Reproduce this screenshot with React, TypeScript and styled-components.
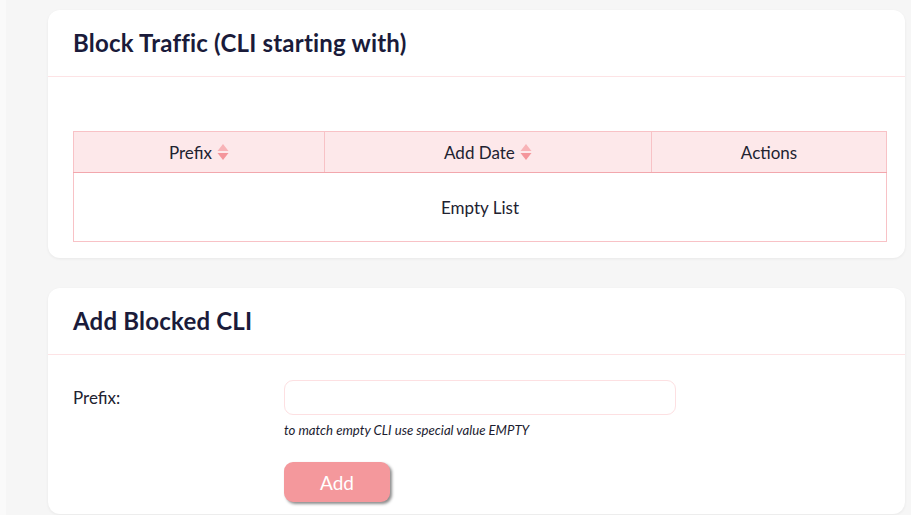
import React from "react";
import styled, { createGlobalStyle } from "styled-components";

const Global = createGlobalStyle`
  html, body { margin: 0; padding: 0; }
  body {
    background: #f6f6f6;
    font-family: Lato, "Open Sans", sans-serif;
    color: #1c1c30;
  }
`;

const Page = styled.div`
  min-height: 515px;
  display: flex;
  background: #f6f6f6;
`;

const Edge = styled.div`
  width: 6px;
  flex: none;
  background: #fafafa;
`;

const Main = styled.main`
  flex: 1;
  padding: 10px 6px 0 42px;
  display: flex;
  flex-direction: column;
  gap: 30px;
`;

const Card = styled.section`
  background: #fff;
  border-radius: 12px;
  box-shadow: 0 1px 3px rgba(0, 0, 0, 0.06);
`;

const CardHeader = styled.header`
  height: 67px;
  box-sizing: border-box;
  padding: 0 25px 1px;
  display: flex;
  align-items: center;
  border-bottom: 1px solid #fde3e5;
`;

const Title = styled.h2`
  margin: 0;
  font-size: 24px;
  font-weight: 700;
  letter-spacing: 0.2px;
  color: #1a1b3a;
`;

const TableBody = styled.div`
  padding: 54px 18px 16px 25px;
`;

const Table = styled.table`
  width: 100%;
  border-collapse: collapse;
  font-size: 17px;
  color: #222230;
`;

const Th = styled.th<{ $w: number }>`
  width: ${(p) => p.$w}px;
  height: 40px;
  background: #fde8ea;
  border: 1px solid #f8c2c6;
  border-bottom-color: #f2a7ad;
  font-weight: 400;
  text-align: center;
  padding: 0;
`;

const Td = styled.td`
  height: 68px;
  text-align: center;
  border: 1px solid #f8c2c6;
  padding: 0;
`;

const HeadInner = styled.span`
  display: inline-flex;
  align-items: center;
  gap: 5px;
`;

const SortIcon = () => (
  <svg width="12" height="20" viewBox="0 0 12 20">
    <path d="M6 2 L11.5 9 H0.5 Z" fill="#f8b3b7" />
    <path d="M6 18 L11.5 11 H0.5 Z" fill="#f4959b" />
  </svg>
);

const FormBody = styled.div`
  padding: 25px 25px 12px 25px;
  display: grid;
  grid-template-columns: 211px 392px;
`;

const Label = styled.label`
  font-size: 17px;
  padding-top: 7px;
  color: #222230;
`;

const Field = styled.div`
  display: flex;
  flex-direction: column;
  align-items: flex-start;
`;

const Input = styled.input`
  width: 392px;
  height: 35px;
  box-sizing: border-box;
  border: 1px solid #fde0e2;
  border-radius: 9px;
  outline: none;
  font-family: inherit;
  font-size: 15px;
  padding: 0 12px;
`;

const Hint = styled.div`
  margin-top: 7px;
  font-size: 13.2px;
  font-style: italic;
  color: #1c1c30;
`;

const Button = styled.button`
  margin-top: 24px;
  width: 106px;
  height: 40px;
  border: none;
  border-radius: 9px;
  background: #f4989c;
  color: #fff;
  font-family: inherit;
  font-size: 19px;
  box-shadow: 2px 2px 3px rgba(0, 0, 0, 0.45);
`;

export default function App() {
  return (
    <>
      <Global />
      <Page>
        <Edge />
        <Main>
          <Card>
            <CardHeader>
              <Title>Block Traffic (CLI starting with)</Title>
            </CardHeader>
            <TableBody>
              <Table>
                <thead>
                  <tr>
                    <Th $w={251}>
                      <HeadInner>
                        Prefix <SortIcon />
                      </HeadInner>
                    </Th>
                    <Th $w={328}>
                      <HeadInner>
                        Add Date <SortIcon />
                      </HeadInner>
                    </Th>
                    <Th $w={235}>Actions</Th>
                  </tr>
                </thead>
                <tbody>
                  <tr>
                    <Td colSpan={3}>Empty List</Td>
                  </tr>
                </tbody>
              </Table>
            </TableBody>
          </Card>
          <Card>
            <CardHeader>
              <Title>Add Blocked CLI</Title>
            </CardHeader>
            <FormBody>
              <Label htmlFor="prefix">Prefix:</Label>
              <Field>
                <Input id="prefix" />
                <Hint>to match empty CLI use special value EMPTY</Hint>
                <Button>Add</Button>
              </Field>
            </FormBody>
          </Card>
        </Main>
      </Page>
    </>
  );
}
